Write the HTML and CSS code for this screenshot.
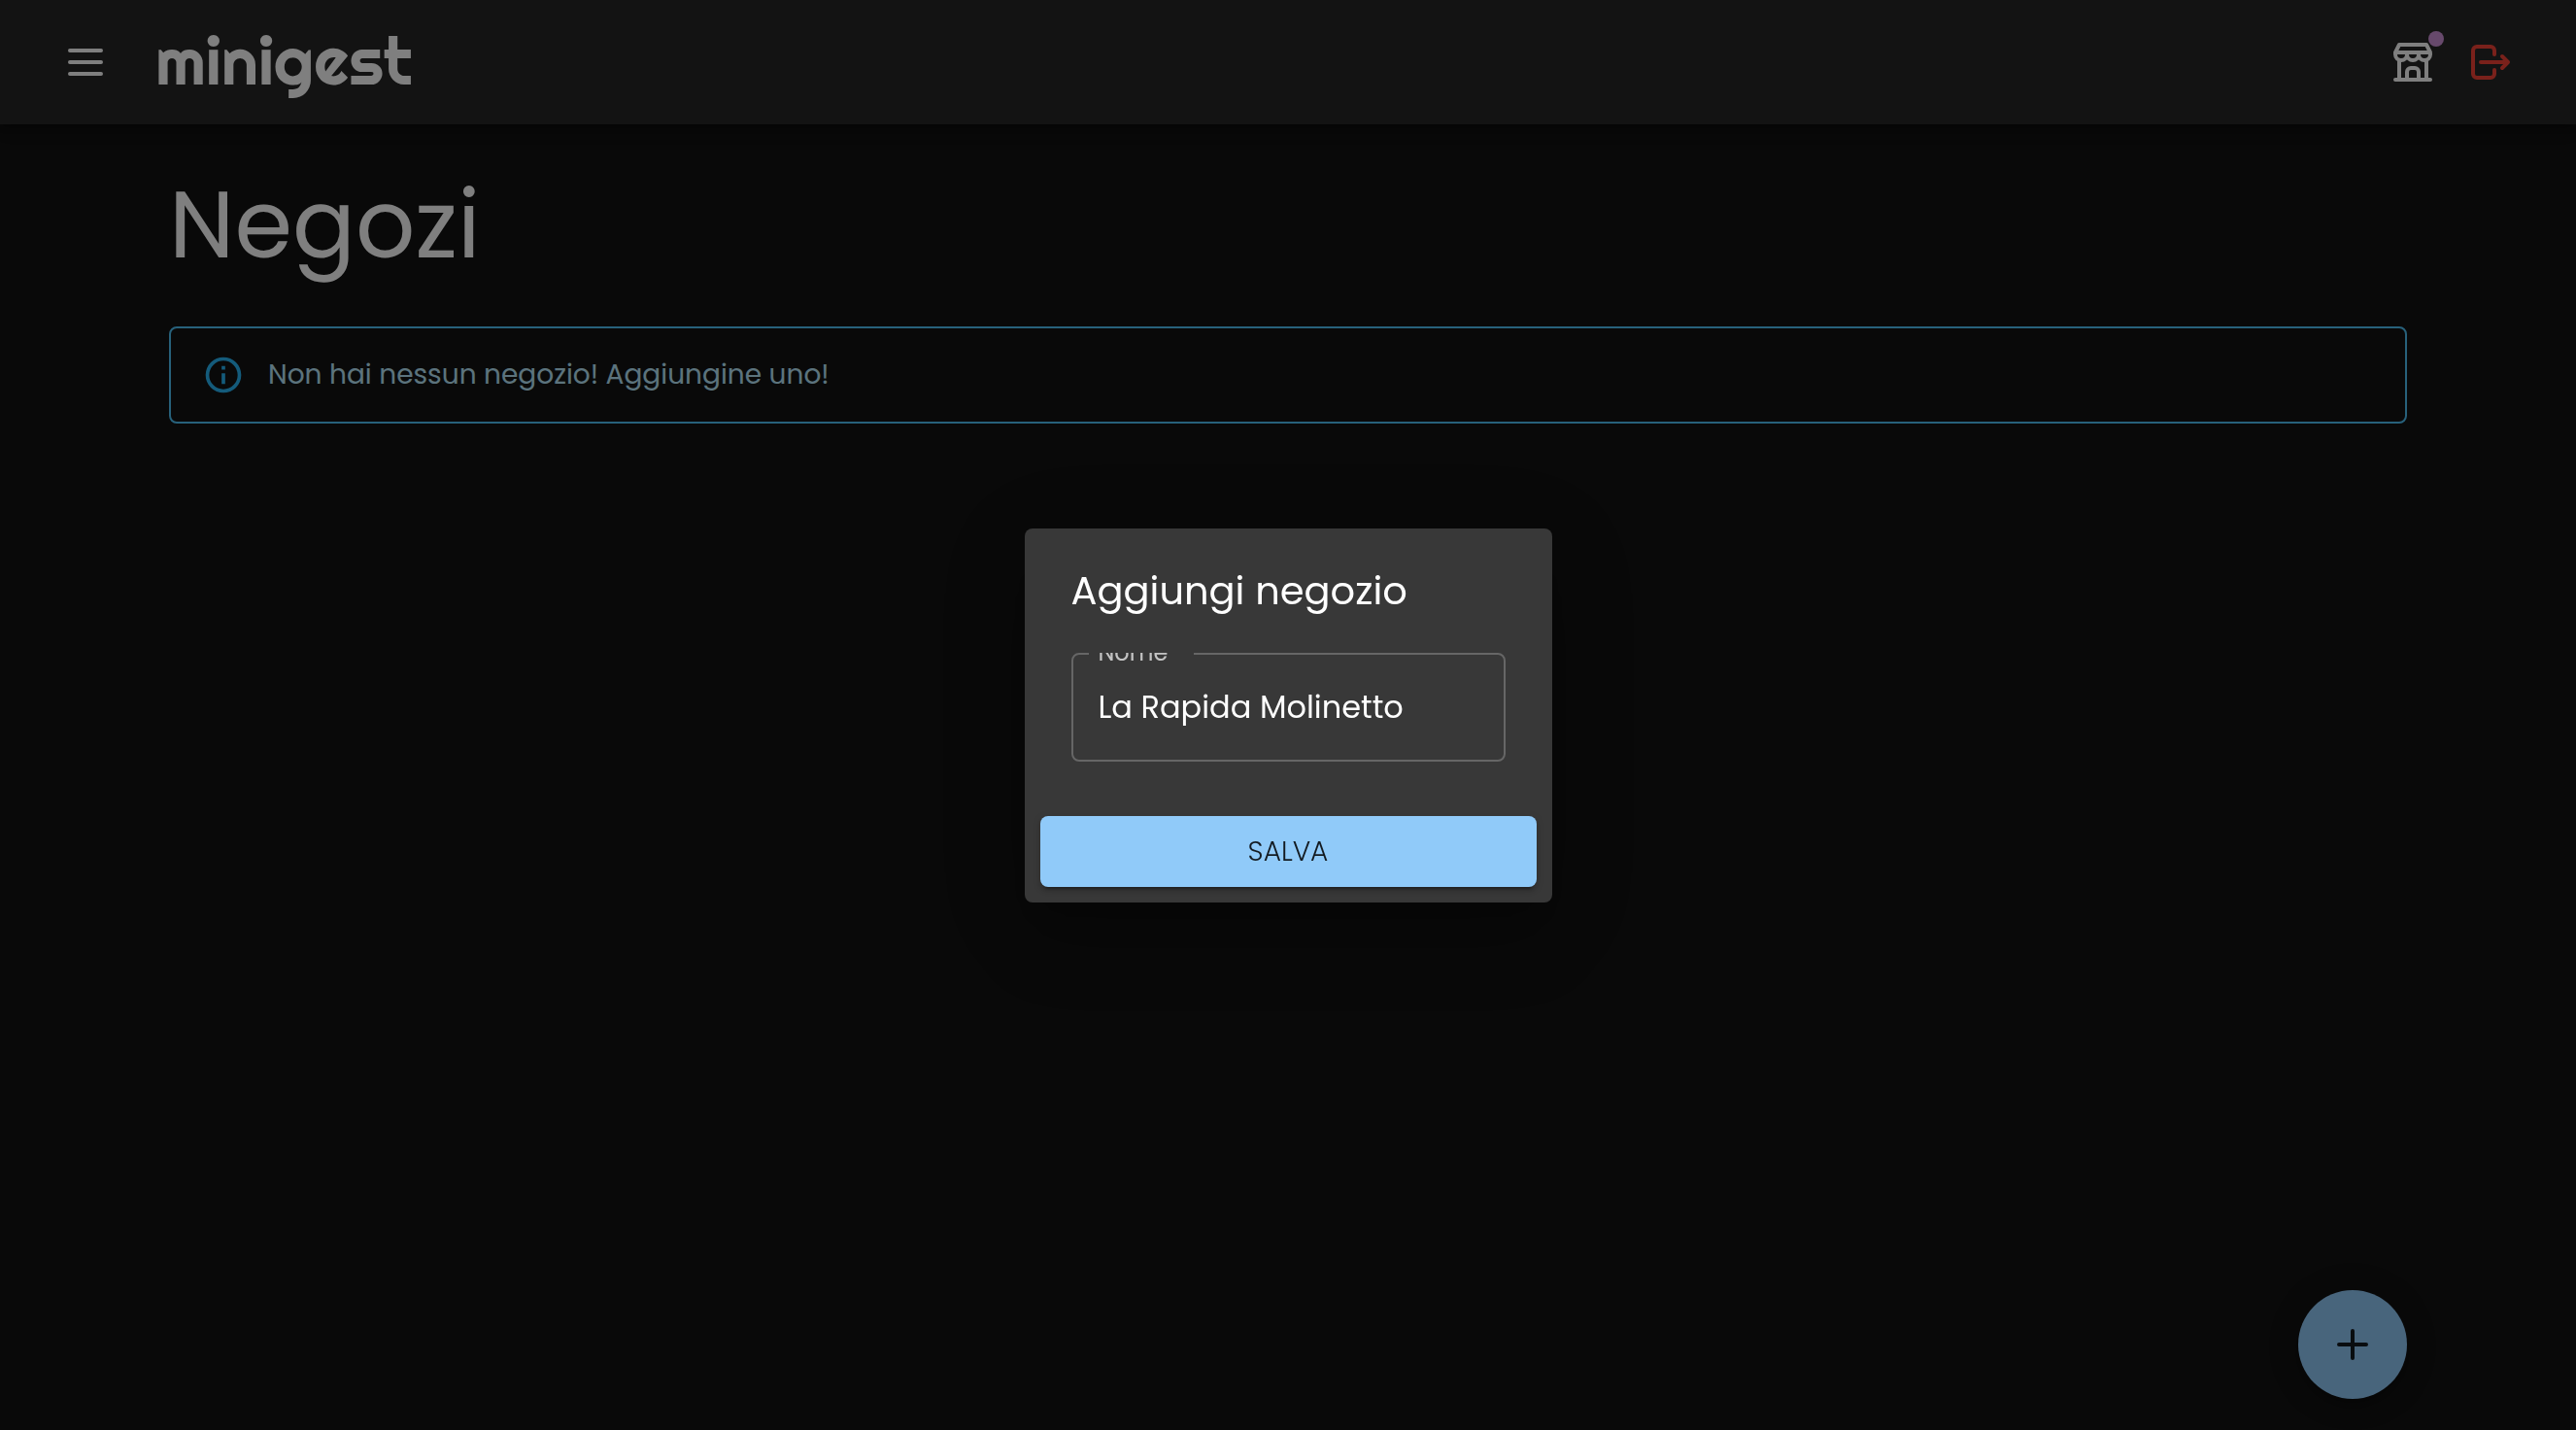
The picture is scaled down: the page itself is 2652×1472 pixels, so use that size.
FILE: index.html
```html
<!DOCTYPE html>
<html lang="it">
<head>
  <meta charset="utf-8">
  <meta name="viewport" content="width=device-width, initial-scale=1">
  <title>Negozi - minigest</title>
  <link rel="stylesheet" href="styles.css">
</head>
<body>
  <header class="appbar">
    <button class="icon-button" type="button" aria-label="Menu">
      <svg class="icon" viewBox="0 0 24 24" stroke-width="2">
        <path d="M4 6h16M4 12h16M4 18h16"/>
      </svg>
    </button>
    <a class="brand" href="#">minigest</a>
    <div class="actions">
      <button class="icon-button" type="button" aria-label="Negozi">
        <svg class="icon" viewBox="0 0 24 24" stroke-width="2">
          <path d="M3 21h18"/>
          <path d="M3 7v1a3 3 0 0 0 6 0v-1m0 1a3 3 0 0 0 6 0v-1m0 1a3 3 0 0 0 6 0v-1h-18l2-4h14l2 4"/>
          <path d="M5 21v-10.15M19 21v-10.15"/>
          <path d="M9 21v-4a2 2 0 0 1 2-2h2a2 2 0 0 1 2 2v4"/>
        </svg>
        <span class="badge"></span>
      </button>
      <button class="icon-button icon-button-danger" type="button" aria-label="Esci">
        <svg class="icon" viewBox="0 0 24 24" stroke-width="2">
          <path d="M14 8v-2a2 2 0 0 0-2-2h-7a2 2 0 0 0-2 2v12a2 2 0 0 0 2 2h7a2 2 0 0 0 2-2v-2"/>
          <path d="M7 12h14l-3-3m0 6l3-3"/>
        </svg>
      </button>
    </div>
  </header>

  <main class="container">
    <h1 class="page-title">Negozi</h1>
    <div class="alert" role="status">
      <svg class="alert-icon" viewBox="0 0 24 24">
        <path d="M11 7h2v2h-2zm0 4h2v6h-2zm1-9a10 10 0 1 0 0 20 10 10 0 0 0 0-20m0 18a8 8 0 1 1 0-16 8 8 0 0 1 0 16"/>
      </svg>
      <p class="alert-text">Non hai nessun negozio! Aggiungine uno!</p>
    </div>
  </main>

  <div class="fab-area">
    <button class="fab" type="button" aria-label="Aggiungi negozio">
      <svg class="icon" viewBox="0 0 24 24" stroke-width="2"><path d="M12 5v14M5 12h14"/></svg>
    </button>
  </div>

  <div class="backdrop">
    <form class="dialog" role="dialog" aria-modal="true" aria-labelledby="dialog-title">
      <h2 class="dialog-title" id="dialog-title">Aggiungi negozio</h2>
      <div class="dialog-content">
        <div class="field">
          <label class="field-label" for="nome">Nome</label>
          <input class="field-input" id="nome" type="text" value="La Rapida Molinetto">
          <fieldset class="field-outline" aria-hidden="true"><legend></legend></fieldset>
        </div>
      </div>
      <div class="dialog-actions">
        <button class="save" type="button">SALVA</button>
      </div>
    </form>
  </div>
</body>
</html>
```
FILE: styles.css
```css
* {
  box-sizing: border-box;
}

body {
  margin: 0;
  min-height: 100vh;
  background: #121212;
  color: #fff;
  font-family: Poppins, Inter, "Open Sans", sans-serif;
}

button,
input {
  font-family: inherit;
}

button {
  border: 0;
  padding: 0;
  cursor: pointer;
}

/* App bar */
.appbar {
  display: flex;
  align-items: center;
  height: 128px;
  padding: 0 64px;
  background: #272727;
  box-shadow: 0 4px 8px -2px rgba(0, 0, 0, .2), 0 8px 10px rgba(0, 0, 0, .14), 0 2px 20px rgba(0, 0, 0, .12);
}

.icon-button {
  position: relative;
  display: flex;
  background: none;
  color: #fff;
}

.icon-button-danger {
  color: #f44336;
}

.icon {
  width: 48px;
  height: 48px;
  fill: none;
  stroke: currentColor;
  stroke-linecap: round;
  stroke-linejoin: round;
}

.badge {
  position: absolute;
  top: -8px;
  right: -8px;
  width: 16px;
  height: 16px;
  border-radius: 50%;
  background: #ce93d8;
}

.brand {
  margin-left: 48px;
  padding-bottom: 4px;
  color: #fff;
  font-family: Righteous, Inter, sans-serif;
  font-size: 68px;
  font-weight: 400;
  line-height: 80px;
  text-decoration: none;
}

.actions {
  display: flex;
  gap: 32px;
  margin-left: auto;
}

/* Page content */
.container {
  max-width: 2400px;
  margin: 0 auto;
  padding: 48px;
}

.page-title {
  margin: 0 0 48px;
  font-size: 96px;
  font-weight: 400;
  line-height: 112px;
}

.alert {
  display: flex;
  align-items: center;
  gap: 24px;
  min-height: 100px;
  padding: 12px 32px;
  border: 2px solid #4fc3f7;
  border-radius: 8px;
}

.alert-icon {
  width: 44px;
  height: 44px;
  fill: #29b6f6;
}

.alert-text {
  margin: 0;
  color: #b8e7fb;
  font-size: 28px;
  line-height: 40px;
}

/* Floating action button */
.fab-area {
  position: fixed;
  right: 0;
  bottom: 32px;
  left: 0;
  display: flex;
  justify-content: flex-end;
  max-width: 2400px;
  margin: 0 auto;
  padding: 0 48px;
}

.fab {
  display: flex;
  align-items: center;
  justify-content: center;
  width: 112px;
  height: 112px;
  border-radius: 50%;
  background: #90caf9;
  color: rgba(0, 0, 0, .87);
  box-shadow: 0 6px 10px -2px rgba(0, 0, 0, .2), 0 12px 20px rgba(0, 0, 0, .14), 0 2px 36px rgba(0, 0, 0, .12);
}

/* Dialog */
.backdrop {
  position: fixed;
  inset: 0;
  display: flex;
  align-items: center;
  justify-content: center;
  background: rgba(0, 0, 0, .5);
}

.dialog {
  width: 543px;
  max-width: calc(100% - 64px);
  border-radius: 8px;
  background: #383838;
  box-shadow: 0 22px 30px -14px rgba(0, 0, 0, .2), 0 48px 76px 6px rgba(0, 0, 0, .14), 0 18px 92px 16px rgba(0, 0, 0, .12);
}

.dialog-title {
  margin: 0;
  padding: 32px 48px;
  font-size: 40px;
  font-weight: 400;
  line-height: 64px;
}

.dialog-content {
  overflow: hidden;
  padding: 0 48px 40px;
}

.field {
  position: relative;
}

.field-label {
  position: absolute;
  top: -16px;
  left: 28px;
  color: rgba(255, 255, 255, .7);
  font-size: 24px;
  line-height: 32px;
}

.field-input {
  display: block;
  width: 100%;
  height: 112px;
  padding: 0 28px;
  border: 0;
  outline: 0;
  background: none;
  color: #fff;
  font-size: 32px;
}

.field-outline {
  position: absolute;
  inset: 0;
  margin: 0;
  padding: 0 16px;
  border: 2px solid rgba(255, 255, 255, .23);
  border-radius: 8px;
  pointer-events: none;
}

.field-outline legend {
  width: 108px;
  height: 2px;
  padding: 0;
}

.dialog-actions {
  display: flex;
  padding: 16px;
}

.save {
  flex: 1;
  padding: 12px 32px;
  border-radius: 8px;
  background: #90caf9;
  color: rgba(0, 0, 0, .87);
  font-size: 28px;
  font-weight: 300;
  line-height: 49px;
  box-shadow: 0 6px 2px -4px rgba(0, 0, 0, .2), 0 4px 4px rgba(0, 0, 0, .14), 0 2px 10px rgba(0, 0, 0, .12);
}
```
